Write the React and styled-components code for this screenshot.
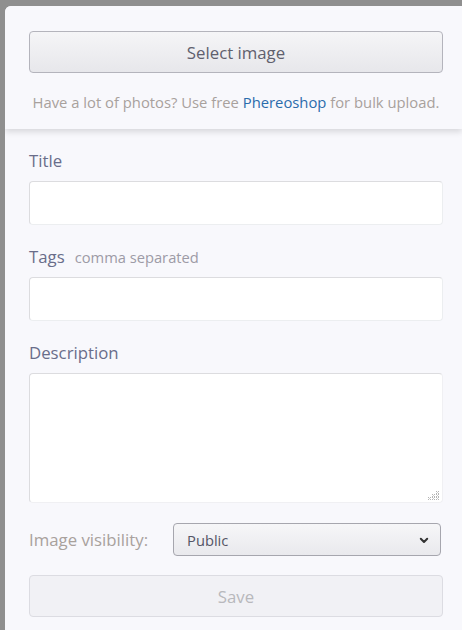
import React from "react";
import styled, { createGlobalStyle } from "styled-components";

const Global = createGlobalStyle`
  html, body { margin: 0; padding: 0; }
  body {
    background: #8f8f8f;
    font-family: "Open Sans", "Noto Sans", sans-serif;
  }
  * { box-sizing: border-box; }
`;

const Panel = styled.div`
  margin: 6px 0 0 5px;
  min-height: 624px;
  background: #f8f8fc;
  border-top-left-radius: 6px;
  display: flex;
  flex-direction: column;
  overflow: hidden;
`;

const Header = styled.div`
  position: relative;
  z-index: 1;
  padding: 25px 19px 17px 24px;
  background: #f8f8fc;
  box-shadow: 0 3px 6px rgba(0, 0, 0, 0.13);
  display: flex;
  flex-direction: column;
  gap: 19px;
`;

const Button = styled.button`
  height: 42px;
  width: 100%;
  border-radius: 4px;
  border: 1px solid ${(p) => (p.$disabled ? "#dcdce2" : "#b4b4bc")};
  background: ${(p) =>
    p.$disabled ? "#f1f1f5" : "linear-gradient(#f5f5f7, #e7e7eb)"};
  color: ${(p) => (p.$disabled ? "#b8b8bc" : "#60606e")};
  font-family: "Open Sans", sans-serif;
  font-size: 16.8px;
  cursor: pointer;
  padding: 0;
`;

const Hint = styled.div`
  font-size: 14.8px;
  line-height: 20px;
  color: #a8a19d;
  text-align: center;
  white-space: nowrap;
`;

const Link = styled.a`
  color: #2b6cac;
  text-decoration: none;
`;

const Body = styled.div`
  padding: 20px 19px 20px 24px;
  display: flex;
  flex-direction: column;
`;

const Field = styled.div`
  display: flex;
  flex-direction: column;
  gap: 8px;
  margin-bottom: 20px;
`;

const Label = styled.label`
  height: 24px;
  font-size: 16.8px;
  line-height: 24px;
  color: #696d8a;
  display: flex;
  align-items: baseline;
  gap: 10px;
`;

const Sub = styled.span`
  font-size: 14.7px;
  line-height: 24px;
  color: #9d9ba6;
`;

const Input = styled.input`
  height: 44px;
  width: 100%;
  background: #fff;
  border: 1px solid #eceef0;
  border-top-color: #dcdcdf;
  border-left-color: #dcdcdf;
  border-radius: 4px;
  font-family: "Open Sans", sans-serif;
  font-size: 14px;
  padding: 0 12px;
  outline: none;
`;

const AreaWrap = styled.div`
  position: relative;
`;

const TextArea = styled.textarea`
  height: 130px;
  width: 100%;
  background: #fff;
  border: 1px solid #f0f0f3;
  border-top-color: #dcdcdf;
  border-left-color: #dcdcdf;
  border-radius: 4px;
  font-family: "Open Sans", sans-serif;
  font-size: 14px;
  padding: 8px 12px;
  resize: none;
  outline: none;
  display: block;
`;

const Grip = styled.svg`
  position: absolute;
  right: 4px;
  bottom: 3px;
  pointer-events: none;
`;

const Row = styled.div`
  display: flex;
  align-items: center;
  gap: 25px;
  margin-bottom: 19px;
  padding-right: 2px;
`;

const RowLabel = styled.span`
  font-size: 16.8px;
  line-height: 22px;
  color: #a8a19d;
  white-space: nowrap;
  flex: none;
`;

const SelectBox = styled.div`
  position: relative;
  flex: 1;
  height: 33px;
  border: 1px solid #a6a6ae;
  border-radius: 4px;
  background: linear-gradient(#f6f6f8, #e9e9ed);
  display: flex;
  align-items: center;
  padding: 0 13px;
  font-size: 14.7px;
  color: #555566;
`;

const Chevron = styled.svg`
  position: absolute;
  right: 11px;
  top: 13px;
`;

const gripDots = [
  [8, 0], [8, 3], [8, 6],
  [4, 3], [4, 6],
  [0, 6],
];

export default function App() {
  return (
    <>
      <Global />
      <Panel>
        <Header>
          <Button>Select image</Button>
          <Hint>
            Have a lot of photos? Use free <Link href="#">Phereoshop</Link> for
            bulk upload.
          </Hint>
        </Header>
        <Body>
          <Field>
            <Label>Title</Label>
            <Input />
          </Field>
          <Field>
            <Label>
              Tags <Sub>comma separated</Sub>
            </Label>
            <Input />
          </Field>
          <Field>
            <Label>Description</Label>
            <AreaWrap>
              <TextArea />
              <Grip width="11" height="9" viewBox="0 0 11 9">
                {gripDots.map(([x, y]) => (
                  <g key={`${x}-${y}`} fill="#b4b4b4">
                    <rect x={x} y={y} width="1" height="1" />
                    <rect x={x + 2} y={y} width="1" height="1" />
                    <rect x={x} y={y + 2} width="1" height="1" />
                    <rect x={x + 2} y={y + 2} width="1" height="1" />
                    <rect x={x + 1} y={y + 1} width="1" height="1" fill="#d0d0d0" />
                  </g>
                ))}
              </Grip>
            </AreaWrap>
          </Field>
          <Row>
            <RowLabel>Image visibility:</RowLabel>
            <SelectBox>
              Public
              <Chevron width="10" height="7" viewBox="0 0 10 7">
                <path
                  d="M1.8 1.8 L5 5 L8.2 1.8"
                  fill="none"
                  stroke="#333"
                  strokeWidth="2"
                  strokeLinecap="round"
                  strokeLinejoin="round"
                />
              </Chevron>
            </SelectBox>
          </Row>
          <Button $disabled>Save</Button>
        </Body>
      </Panel>
    </>
  );
}
